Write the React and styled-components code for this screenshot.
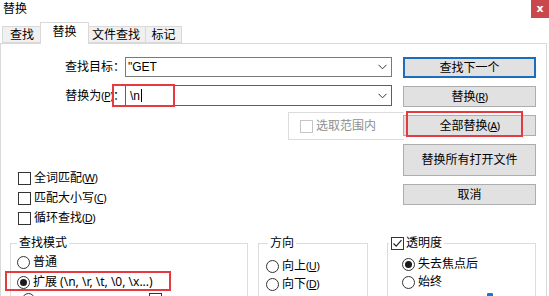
import React from 'react';
import styled, { createGlobalStyle } from 'styled-components';

const Global = createGlobalStyle`
  html, body { margin: 0; padding: 0; background: #fff; }
  body {
    font-family: "Noto Sans", "Noto Sans CJK SC", sans-serif;
    font-size: 12px;
    color: #000;
  }
  * { box-sizing: border-box; }
`;

const Window = styled.div`
  width: 549px;
  height: 296px;
  overflow: hidden;
  background: #fff;
  display: flex;
  flex-direction: column;
`;

const TitleBar = styled.div`
  height: 22px;
  display: flex;
  justify-content: space-between;
  align-items: flex-start;
  flex: none;
`;

const Title = styled.div`
  padding: 2px 0 0 3px;
  line-height: 14px;
  font-size: 12px;
`;

const Close = styled.div`
  width: 18px;
  height: 18px;
  background: #c9484b;
  color: #fff;
  font: bold 11px/17px "DejaVu Sans", sans-serif;
  text-align: center;
`;

const TabStrip = styled.div`
  height: 21px;
  display: flex;
  align-items: flex-end;
  padding-left: 2px;
  flex: none;
`;

const Tab = styled.div`
  width: ${p => p.w}px;
  height: ${p => (p.active ? 22 : 17)}px;
  margin: ${p => (p.active ? '0 -2px -1px -2px' : '0')};
  position: ${p => (p.active ? 'relative' : 'static')};
  z-index: ${p => (p.active ? 1 : 0)};
  background: ${p => (p.active ? '#fff' : '#f0f0f0')};
  border: 1px solid #d9d9d9;
  border-bottom: ${p => (p.active ? 'none' : '1px solid #d9d9d9')};
  border-left: ${p => (p.first || p.active ? '1px solid #d9d9d9' : 'none')};
  text-align: center;
  line-height: ${p => (p.active ? 18 : 15)}px;
  font-size: 12px;
`;

const Panel = styled.div`
  flex: 1;
  width: 547px;
  border: 1px solid #d9d9d9;
  border-bottom: none;
  display: flex;
  flex-direction: column;
  min-height: 0;
`;

const Top = styled.div`
  height: 192px;
  display: flex;
  flex: none;
`;

const FormCol = styled.div`
  width: 402px;
  display: flex;
  flex-direction: column;
  padding-top: 13px;
`;

const FieldRow = styled.div`
  position: relative;
  display: flex;
  align-items: center;
  height: ${p => p.h || 20}px;
  margin-top: ${p => p.mt || 0}px;
`;

const FieldLabel = styled.div`
  width: 124px;
  text-align: right;
  white-space: nowrap;
  line-height: 14px;
`;

const Combo = styled.div`
  width: 267px;
  height: ${p => p.h || 20}px;
  border: 1px solid ${p => (p.focused ? '#0078d7' : '#7a7a7a')};
  display: flex;
  align-items: center;
  background: #fff;
`;

const ComboText = styled.div`
  flex: 1;
  padding-left: ${p => p.pl || 2}px;
  font-family: "Liberation Sans", "Noto Sans CJK SC", sans-serif;
  font-size: 12px;
  line-height: 14px;
  display: flex;
  align-items: center;
`;

const Caret = styled.span`
  display: inline-block;
  width: 1px;
  height: 13px;
  background: #000;
  margin-left: 1px;
`;

const Chevron = styled.div`
  width: 17px;
  height: 100%;
  display: flex;
  align-items: center;
  justify-content: center;
`;

const Mark = styled.div`
  position: absolute;
  left: ${p => p.l}px;
  top: ${p => p.t}px;
  width: ${p => p.w}px;
  height: ${p => p.h}px;
  border: 2px solid #e53a40;
  pointer-events: none;
  z-index: 2;
`;

const RangeBox = styled.div`
  margin: 6px 0 0 287px;
  width: 116px;
  height: 28px;
  border: 1px solid #dcdcdc;
  border-right: none;
  display: flex;
  align-items: center;
  padding-left: 11px;
`;

const Checks = styled.div`
  margin: 28px 0 0 17px;
  display: flex;
  flex-direction: column;
`;

const Option = styled.div`
  display: flex;
  align-items: center;
  height: ${p => p.h || 20}px;
  gap: 3px;
  color: ${p => (p.disabled ? '#8f8f8f' : '#000')};
  white-space: nowrap;
  line-height: 14px;
`;

const Box = styled.span`
  width: 13px;
  height: 13px;
  flex: none;
  border: 1px solid ${p => (p.disabled ? '#c4c4c4' : '#333')};
  background: #fff;
  display: inline-flex;
  align-items: center;
  justify-content: center;
`;

const Circle = styled.span`
  width: 13px;
  height: 13px;
  flex: none;
  border-radius: 50%;
  border: 1px solid #333;
  background: #fff;
  display: inline-flex;
  align-items: center;
  justify-content: center;
`;

const Dot = styled.span`
  width: 7px;
  height: 7px;
  border-radius: 50%;
  background: #1a1a1a;
`;

const Mn = styled.span`
  font-size: 11px;
  letter-spacing: -0.5px;
  u { text-decoration: underline; text-underline-offset: 1px; }
`;

const ButtonCol = styled.div`
  position: relative;
  width: 133px;
  padding-top: 13px;
  display: flex;
  flex-direction: column;
`;

const Button = styled.div`
  height: ${p => p.h || 21}px;
  margin-top: ${p => p.mt || 0}px;
  background: #e1e1e1;
  border: ${p => (p.primary ? '2px solid #1c6cc0' : '1px solid #adadad')};
  display: flex;
  align-items: center;
  justify-content: center;
  font-size: 12px;
  line-height: 14px;
  white-space: nowrap;
`;

const Groups = styled.div`
  display: flex;
  align-items: flex-start;
  padding-left: 9px;
  flex: 1;
  min-height: 0;
`;

const Group = styled.fieldset`
  width: ${p => p.w}px;
  margin: 0 ${p => p.mr || 0}px 0 0;
  padding: ${p => p.pt || 0}px 0 0 ${p => p.pl || 6}px;
  border: 1px solid #dcdcdc;
  height: 80px;
  min-width: 0;
  display: flex;
  flex-direction: column;
`;

const Legend = styled.legend`
  padding: 0 2px;
  margin-left: ${p => p.ml || 0}px;
  line-height: 14px;
  font-size: 12px;
  display: flex;
  align-items: center;
  gap: 2px;
  background: #fff;
`;

const MarkAnchor = styled.div`
  position: relative;
`;

const PeekRow = styled.div`
  display: flex;
  align-items: flex-start;
  padding-top: 1px;
  gap: 114px;
  padding-left: 5px;
`;

const SliderTrack = styled.div`
  margin: 2px 0 0 85px;
  height: 10px;
`;

const Thumb = styled.div`
  width: 6px;
  height: 10px;
  background: #1679d4;
  border-radius: 1px;
`;

const ChevronIcon = () => (
  <svg width="9" height="6" viewBox="0 0 9 6">
    <path d="M0.5 0.8 L4.5 4.8 L8.5 0.8" fill="none" stroke="#333" strokeWidth="1" />
  </svg>
);

const CheckIcon = () => (
  <svg width="11" height="11" viewBox="0 0 11 11">
    <path d="M1.5 5.5 L4.2 8.2 L9.5 2.2" fill="none" stroke="#222" strokeWidth="1.2" />
  </svg>
);

const Check = ({ label, mn, disabled, checked }) => (
  <Option disabled={disabled}>
    <Box disabled={disabled}>{checked && <CheckIcon />}</Box>
    <span>
      {label}
      {mn && (
        <Mn>
          (<u>{mn}</u>)
        </Mn>
      )}
    </span>
  </Option>
);

const Radio = ({ label, mn, checked, h }) => (
  <Option h={h}>
    <Circle>{checked && <Dot />}</Circle>
    <span>
      {label}
      {mn && (
        <Mn>
          (<u>{mn}</u>)
        </Mn>
      )}
    </span>
  </Option>
);

export default function App() {
  return (
    <Window>
      <Global />
      <TitleBar>
        <Title>替换</Title>
        <Close>x</Close>
      </TitleBar>
      <TabStrip>
        <Tab w={40} first>查找</Tab>
        <Tab w={49} active>替换</Tab>
        <Tab w={59}>文件查找</Tab>
        <Tab w={36}>标记</Tab>
      </TabStrip>
      <Panel>
        <Top>
          <FormCol>
            <FieldRow>
              <FieldLabel>查找目标：</FieldLabel>
              <Combo>
                <ComboText>"GET</ComboText>
                <Chevron><ChevronIcon /></Chevron>
              </Combo>
            </FieldRow>
            <FieldRow mt={8} h={21}>
              <FieldLabel>
                替换为<Mn>(<u>P</u>)</Mn>：
              </FieldLabel>
              <Combo focused h={21}>
                <ComboText pl={4}>
                  \n<Caret />
                </ComboText>
                <Chevron><ChevronIcon /></Chevron>
              </Combo>
              <Mark l={111} t={-1} w={63} h={23} />
            </FieldRow>
            <RangeBox>
              <Check label="选取范围内" disabled />
            </RangeBox>
            <Checks>
              <Check label="全词匹配" mn="W" />
              <Check label="匹配大小写" mn="C" />
              <Check label="循环查找" mn="D" />
            </Checks>
          </FormCol>
          <ButtonCol>
            <Button primary>查找下一个</Button>
            <Button mt={8}>替换<Mn>(<u>R</u>)</Mn></Button>
            <Button mt={8}>全部替换<Mn>(<u>A</u>)</Mn></Button>
            <Button mt={8} h={32}>替换所有打开文件</Button>
            <Button mt={8}>取消</Button>
            <Mark l={3} t={67} w={117} h={26} />
          </ButtonCol>
        </Top>
        <Groups>
          <Group w={238} mr={10} pt={2} pl={6}>
            <Legend>查找模式</Legend>
            <Radio label="普通" />
            <MarkAnchor>
              <Radio label="扩展 (\n, \r, \t, \0, \x...)" checked />
              <Mark l={-12} t={-1} w={166} h={20} />
            </MarkAnchor>
            <PeekRow>
              <Circle />
              <Box />
            </PeekRow>
          </Group>
          <Group w={110} mr={19} pt={7} pl={7}>
            <Legend ml={2}>方向</Legend>
            <Radio label="向上" mn="U" h={18} />
            <Radio label="向下" mn="D" h={18} />
          </Group>
          <Group w={149} pt={5} pl={14}>
            <Legend ml={-13}>
              <Box><CheckIcon /></Box>透明度
            </Legend>
            <Radio label="失去焦点后" checked h={18} />
            <Radio label="始终" h={18} />
            <SliderTrack>
              <Thumb />
            </SliderTrack>
          </Group>
        </Groups>
      </Panel>
    </Window>
  );
}
